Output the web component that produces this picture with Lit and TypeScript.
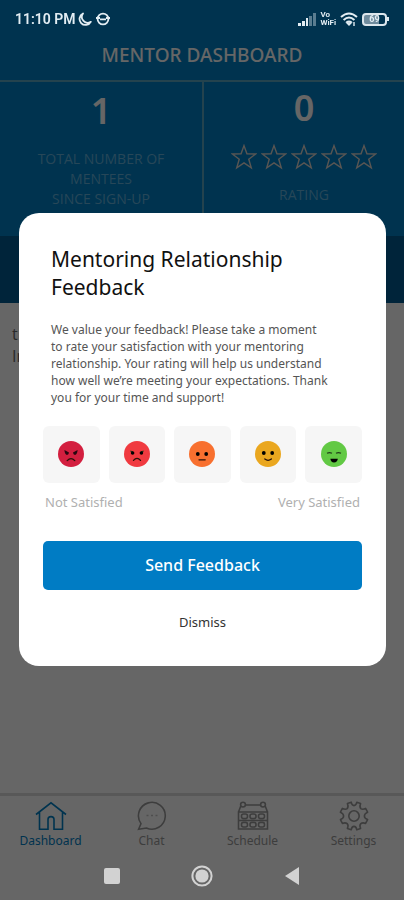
import { LitElement, html, css, svg } from "lit";
import { customElement, state } from "lit/decorators.js";
import { classMap } from "lit/directives/class-map.js";

const STAR = "M12 1.5 L14.7 9 L22.8 9.2 L16.4 14.1 L18.7 22 L12 17.4 L5.3 22 L7.6 14.1 L1.2 9.2 L9.3 9 Z";

const FACES = [
  {
    name: "Very dissatisfied",
    color: "#d31f3f",
    art: svg`<path d="M6.4 9 L11 11.6 Q10.8 14 9 14 Q6.8 13.6 6.4 9Z M19.6 9 L15 11.6 Q15.2 14 17 14 Q19.2 13.6 19.6 9Z" fill="#2a0710"/><path d="M9.2 19.6 Q13 15.6 16.8 19.6" class="mouth"/>`,
  },
  {
    name: "Dissatisfied",
    color: "#f03a40",
    art: svg`<path d="M6.4 10 L9 11 M19.6 10 L17 11" class="thin"/><circle cx="8.6" cy="12" r="1.8"/><circle cx="17.4" cy="12" r="1.8"/><path d="M9.5 19.4 Q13 15.4 16.5 19.4" class="mouth"/>`,
  },
  {
    name: "Neutral",
    color: "#f8702f",
    art: svg`<circle cx="8.8" cy="13" r="1.9"/><circle cx="17.2" cy="13" r="1.9"/><path d="M10 18.8 H16.2" class="mouth"/>`,
  },
  {
    name: "Satisfied",
    color: "#eaa71f",
    art: svg`<circle cx="8.8" cy="12" r="1.9"/><circle cx="17.2" cy="12" r="1.9"/><path d="M9.8 18 Q13 20.6 16.4 18" class="mouth"/>`,
  },
  {
    name: "Very satisfied",
    color: "#62c944",
    art: svg`<path d="M6 12.2 Q8.5 11 11 12.2 M15 12.2 Q17.5 11 20 12.2" class="thin"/><path d="M9.4 17.8 H16.8 Q16.4 21.4 13 21.4 Q9.8 21.4 9.4 17.8Z"/>`,
  },
];

const TABS = [
  {
    label: "Dashboard",
    icon: svg`<path d="M1 13.5 L16 1.8 L31 13.5 M4.5 11 V28.2 H13 V18.5 Q13 15.6 16 15.6 Q19 15.6 19 18.5 V28.2 H27.5 V11"/>`,
  },
  {
    label: "Chat",
    icon: svg`<path d="M2.6 28.2 L5 22.6 A13.4 13.4 0 1 1 10.4 27 Z"/><path d="M10.5 14.5 h2 M15 14.5 h2 M19.5 14.5 h2" opacity=".6"/>`,
  },
  {
    label: "Schedule",
    icon: svg`<path d="M8.4 4 H23.6 M1.5 11 L3.8 5 M30.5 11 L28.2 5 M1.5 11 V28 H30.5 V11 Z"/><circle cx="6" cy="3.6" r="2.4"/><circle cx="26" cy="3.6" r="2.4"/><path d="M2 19.5 H30"/><rect x="4.5" y="13" width="6" height="4.6" rx="2"/><rect x="13" y="13" width="6" height="4.6" rx="2"/><rect x="21.5" y="13" width="6" height="4.6" rx="2"/><rect x="4.5" y="21.4" width="6" height="4.6" rx="2"/><rect x="13" y="21.4" width="6" height="4.6" rx="2"/><rect x="21.5" y="21.4" width="6" height="4.6" rx="2"/>`,
  },
  {
    label: "Settings",
    icon: svg`<path d="M13.2 1.2 Q13.8 4.6 16 4.6 Q18.2 4.6 18.8 1.2 L22.6 2.6 Q21.2 5.8 22.8 7.6 Q24.6 9 27.6 7.4 L29.6 11.2 Q26.4 12.6 26.4 15 Q26.4 17.4 29.6 18.6 L27.6 22.4 Q24.6 21.2 22.8 22.6 Q21.2 24.4 22.6 27.4 L18.8 28.8 Q18.2 25.4 16 25.4 Q13.8 25.4 13.2 28.8 L9.4 27.4 Q10.8 24.4 9.2 22.6 Q7.4 21.2 4.4 22.4 L2.4 18.6 Q5.6 17.4 5.6 15 Q5.6 12.6 2.4 11.2 L4.4 7.4 Q7.4 9 9.2 7.6 Q10.8 5.8 9.4 2.6 Z" stroke-linejoin="round"/><circle cx="16" cy="15" r="5.2"/>`,
  },
];

@customElement("app-root")
export class AppRoot extends LitElement {
  @state() private rating = -1;

  static styles = css`
    :host {
      display: block;
      font-family: "Noto Sans", "Open Sans", sans-serif;
    }
    * { box-sizing: border-box; }
    h1, h2, p, fieldset { margin: 0; padding: 0; border: 0; }
    button { font: inherit; border: 0; background: none; padding: 0; cursor: pointer; }
    svg { display: block; }
    .screen {
      display: flex;
      flex-direction: column;
      min-height: 100vh;
      background: #fff;
    }
    .scrim {
      position: fixed;
      inset: 0;
      background: rgba(0, 0, 0, 0.6);
      display: flex;
      align-items: center;
      justify-content: center;
      padding: 0 18px 22px 19px;
    }
    /* status bar */
    .status {
      position: fixed;
      z-index: 2;
      top: 0;
      left: 0;
      right: 0;
      height: 38px;
      padding: 0 15px;
      display: flex;
      align-items: center;
      justify-content: space-between;
      color: #e2edf3;
      font: 600 14px/16px Roboto, sans-serif;
    }
    .group { display: flex; align-items: center; gap: 4px; }
    .clock { gap: 2px; }
    .vo { font: 700 8px/8px Roboto, sans-serif; }
    .battery {
      width: 25px;
      height: 13px;
      border: 2px solid #dce7ed;
      border-radius: 4px;
      background: linear-gradient(90deg, #6f8c9e 70%, transparent 70%);
      font: 700 9px/9px Roboto, sans-serif;
      text-align: center;
    }
    .tip { width: 2px; height: 4px; background: #dce7ed; margin-left: -4px; }
    /* page */
    .top { background: #0080c5; color: #fff; padding-top: 38px; }
    .heading {
      font-size: 19px;
      line-height: 34px;
      font-weight: 500;
      text-align: center;
      height: 42px;
    }
    .stats {
      display: grid;
      grid-template-columns: 1fr 1fr;
      border-top: 2px solid #5aa8c4;
      height: 156px;
      text-align: center;
    }
    .stat { display: flex; flex-direction: column; align-items: center; }
    .stat + .stat { border-left: 2px solid #5aa8c4; }
    .number { font-size: 36px; line-height: 52px; font-weight: 600; }
    .number.low { line-height: 58px; padding-bottom: 9px; }
    .caption { font-family: "Open Sans", sans-serif; font-size: 14px; line-height: 20px; color: #61b1dc; }
    .stars { display: flex; gap: 4px; padding: 10px 0 15px; }
    .stars path { fill: none; stroke: #dcd5cf; stroke-width: 1.3; }
    .band { height: 67px; background: #005a91; }
    .content {
      flex: 1;
      padding: 20px 12px;
      font-family: "Open Sans", sans-serif;
      font-size: 16px;
      line-height: 22px;
      color: #666;
    }
    .tabs {
      border-top: 3px solid #dcdcdc;
      display: grid;
      grid-template-columns: repeat(4, 1fr);
      padding: 5px 0 2px;
    }
    .tab {
      display: flex;
      flex-direction: column;
      align-items: center;
      gap: 1px;
      text-decoration: none;
      color: #999;
      font-size: 12px;
      line-height: 18px;
    }
    .tab svg { fill: none; stroke: currentColor; stroke-width: 1.6; }
    .tab.active { color: #0080c5; }
    .system {
      position: fixed;
      z-index: 2;
      left: 0;
      right: 0;
      bottom: 0;
      height: 48px;
      display: flex;
      align-items: center;
      justify-content: center;
      gap: 68px;
    }
    .system-space { height: 48px; }
    /* dialog */
    .dialog {
      flex: 1;
      max-width: 420px;
      background: #fff;
      border-radius: 20px;
      padding: 32px 24px 34px;
      display: flex;
      flex-direction: column;
    }
    .title { font-size: 21px; line-height: 28px; font-weight: 400; padding: 0 8px; color: #111; }
    .message { font-size: 12px; line-height: 17px; color: #555; padding: 20px 8px; }
    .faces { display: grid; grid-template-columns: repeat(5, 1fr); gap: 9px; }
    .face {
      height: 57px;
      background: #f6f6f6;
      border-radius: 6px;
      display: flex;
      align-items: center;
      justify-content: center;
      cursor: pointer;
    }
    .face.picked { box-shadow: 0 0 0 2px #0080c5; }
    .radio { position: absolute; opacity: 0; pointer-events: none; }
    .mouth { fill: none; stroke: #2b1208; stroke-width: 1.3; stroke-linecap: round; }
    .thin { fill: none; stroke: #23401a; stroke-width: 1.2; }
    .scale {
      display: flex;
      justify-content: space-between;
      padding: 10px 2px 30px;
      font-size: 13px;
      line-height: 18px;
      color: #b0b0b0;
    }
    .send {
      height: 49px;
      border-radius: 5px;
      background: #007cc4;
      color: #fff;
      font-size: 16px;
      font-weight: 500;
    }
    .dismiss { align-self: center; margin-top: 22px; font-size: 13px; line-height: 20px; color: #333; }
  `;

  render() {
    return html`
      <div class="status">
        <div class="group clock">
          <span>11:10 PM</span>
          <svg width="14" height="14" viewBox="0 0 14 14"><path d="M5 1.5 A6 6 0 1 0 12.8 9.8 A5.8 5.8 0 0 1 5 1.5Z" fill="none" stroke="#e2edf3" stroke-width="1.8" stroke-linejoin="round"/></svg>
          <svg width="18" height="14" viewBox="-2 0 18 14" fill="none" stroke="#e2edf3" stroke-width="1.8"><circle cx="7" cy="7" r="5.4"/><path d="M0 6 H4 M10 6 H14 M4 7.4 H10"/></svg>
        </div>
        <div class="group">
          <svg width="18" height="13" viewBox="0 0 18 13" fill="#e2edf3"><path d="M0 10 h3 v3 h-3z M4 8 h3 v5 h-3z M8 5 h2 v8 h-2z"/><path d="M11 3 h3 v10 h-3z M15 0 h3 v13 h-3z" opacity=".4"/></svg>
          <div class="vo">Vo<br />WiFi</div>
          <svg width="18" height="14" viewBox="0 0 18 14" fill="none" stroke="#e2edf3" stroke-width="2"><path d="M1 5 Q9 -2 17 5 M3.6 8 Q9 3 14.4 8 M6.4 10.6 Q9 8.4 11.6 10.6"/><path d="M7 11 h4 l-2 2z M14 10 v4" stroke-width="1.4"/></svg>
          <div class="battery">69</div>
          <div class="tip"></div>
        </div>
      </div>

      <div class="screen">
        <header class="top">
          <h1 class="heading">MENTOR DASHBOARD</h1>
          <div class="stats">
            <div class="stat">
              <div class="number low">1</div>
              <div class="caption">TOTAL NUMBER OF<br />MENTEES<br />SINCE SIGN-UP</div>
            </div>
            <div class="stat">
              <div class="number">0</div>
              <div class="stars">
                ${[0, 1, 2, 3, 4].map(() => html`<svg width="26" height="26" viewBox="0 0 24 24"><path d=${STAR} /></svg>`)}
              </div>
              <div class="caption">RATING</div>
            </div>
          </div>
          <div class="band"></div>
        </header>
        <main class="content">t<br />In</main>
        <nav class="tabs">
          ${TABS.map(
            (t, i) => html`<a href="#" class=${classMap({ tab: true, active: i === 0 })}>
              <svg width="32" height="30" viewBox="0 0 32 30">${t.icon}</svg>${t.label}
            </a>`
          )}
        </nav>
        <div class="system-space"></div>
      </div>

      <div class="scrim">
        <section class="dialog" role="dialog" aria-modal="true" aria-labelledby="title">
          <h2 class="title" id="title">Mentoring Relationship Feedback</h2>
          <p class="message">
            We value your feedback! Please take a moment<br />
            to rate your satisfaction with your mentoring<br />
            relationship. Your rating will help us understand<br />
            how well we’re meeting your expectations. Thank<br />
            you for your time and support!
          </p>
          <fieldset class="faces" aria-label="Satisfaction">
            ${FACES.map(
              (f, i) => html`<label class=${classMap({ face: true, picked: this.rating === i })}>
                <input class="radio" type="radio" name="rating" aria-label=${f.name}
                  .checked=${this.rating === i} @change=${() => (this.rating = i)} />
                <svg width="26" height="26" viewBox="0 0 26 26"><circle cx="13" cy="13" r="13" fill=${f.color} />${f.art}</svg>
              </label>`
            )}
          </fieldset>
          <div class="scale"><span>Not Satisfied</span><span>Very Satisfied</span></div>
          <button class="send">Send Feedback</button>
          <button class="dismiss">Dismiss</button>
        </section>
      </div>

      <div class="system">
        <button aria-label="Recent apps"><svg width="22" height="22" viewBox="0 0 22 22"><rect x="3" y="3" width="16" height="16" rx="2" fill="#d2d2d2"/></svg></button>
        <button aria-label="Home"><svg width="22" height="22" viewBox="0 0 22 22"><circle cx="11" cy="11" r="9.6" fill="none" stroke="#d2d2d2" stroke-width="2"/><circle cx="11" cy="11" r="6.6" fill="#d2d2d2"/></svg></button>
        <button aria-label="Back"><svg width="22" height="22" viewBox="0 0 22 22"><path d="M18 2 V20 L4 11Z" fill="#d2d2d2"/></svg></button>
      </div>
    `;
  }
}
